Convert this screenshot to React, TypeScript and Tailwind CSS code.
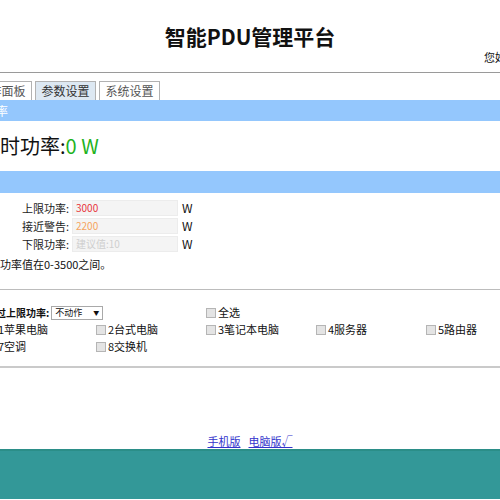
import React from "react";

const font = { fontFamily: '"Microsoft YaHei", "Noto Sans CJK SC", "Noto Sans", sans-serif' };

const tabs = [
  { name: "操作面板", active: false },
  { name: "参数设置", active: true },
  { name: "系统设置", active: false },
];

const limits = [
  { label: "上限功率:", value: "3000", color: "text-[#e8363c]" },
  { label: "接近警告:", value: "2200", color: "text-[#f4a461]" },
  { label: "下限功率:", value: "", color: "text-[#333]" },
];

const devices = ["1苹果电脑", "2台式电脑", "3笔记本电脑", "4服务器", "5路由器", "7空调", "8交换机"];

function Check({ label }: { label: string }) {
  return (
    <label className="flex items-center gap-[2px] whitespace-nowrap">
      <span className="w-[10px] h-[10px] border border-[#b5b5b5] bg-[#e4e4e4]" />
      <span>{label}</span>
    </label>
  );
}

export default function App() {
  return (
    <div className="w-[500px] h-[500px] overflow-hidden bg-white text-[#111]" style={font}>
      <div className="w-[600px] -ml-[50px] flex flex-col">
        {/* header */}
        <div className="h-[73px] flex flex-col pt-[21px] border-b border-[#9a9a9a]">
          <div className="text-center text-[21px] leading-[30px] font-bold">智能PDU管理平台</div>
          <div className="pl-[534px] -mt-[2px] text-[11px] leading-[16px] whitespace-nowrap">您好，admin</div>
        </div>

        {/* tabs */}
        <div className="flex gap-[3px] pl-[21px] mt-[8px] h-[19px]">
          {tabs.map((t) => (
            <div
              key={t.name}
              className={`w-[61px] h-[19px] border border-b-0 border-[#b2b2b2] text-[12px] leading-[18px] text-center ${
                t.active ? "bg-[#dde8f2] text-[#333]" : "bg-white text-[#555]"
              }`}
            >
              {t.name}
            </div>
          ))}
        </div>

        {/* realtime power */}
        <div className="h-[21px] bg-[#94c7fd] text-white text-[12px] leading-[21px] pl-[10px]">实时功率</div>
        <div className="h-[50px] flex items-center pl-[30px] text-[20px]">
          <span>实时功率:</span>
          <span className="text-[#1eb31e]">0 W</span>
        </div>

        {/* thresholds */}
        <div className="h-[22px] bg-[#94c7fd] text-white text-[12px] leading-[22px] pl-[10px]">阈值</div>
        <div className="flex flex-col pt-[6px]">
          {limits.map((l) => (
            <div key={l.label} className="h-[18px] flex items-center text-[11px]">
              <span className="w-[119px] text-right text-[#222]">{l.label}</span>
              <span
                className={`ml-[3px] w-[106px] h-[16px] bg-[#f4f4f4] border border-[#ececec] pl-[3px] text-[10px] leading-[14px] ${l.color}`}
              >
                {l.value || <span className="text-[#cfcfcf]">建议值:10</span>}
              </span>
              <span className="ml-[4px] text-[12px]">W</span>
            </div>
          ))}
          <div className="mt-[2px] h-[18px] pl-[28px] text-[11px] leading-[18px] whitespace-nowrap">注：功率值在0-3500之间。</div>
        </div>

        <div className="mt-[16px] h-px bg-[#bcbcbc]" />

        {/* actions */}
        <div className="pt-[14px] pl-[36px] text-[11px]">
          <div className="grid grid-cols-[110px_110px_110px_110px_110px] auto-rows-[17px] items-center">
            <div className="col-span-2 flex items-center gap-[2px] whitespace-nowrap">
              <span className="font-bold text-[10px]">超过上限功率:</span>
              <span className="w-[52px] h-[14px] border border-[#a9a9a9] flex items-center justify-between px-[3px] text-[9px] leading-[12px]">
                <span>不动作</span>
                <span className="text-[6px]">▼</span>
              </span>
            </div>
            <Check label="全选" />
            <div />
            <div />
            {devices.map((d) => (
              <Check key={d} label={d} />
            ))}
          </div>
        </div>

        <div className="mt-[11px] h-[2px] bg-[#cacaca]" />

        {/* version links */}
        <div className="h-[65px]" />
        <div className="h-[16px] flex justify-center gap-[8px] text-[11px] leading-[16px] text-[#3333cc]">
          <span className="underline">手机版</span>
          <span className="underline">电脑版√</span>
        </div>

        <div className="h-[50px] bg-[#339898] border-t-2 border-[#2b8e88]" />
      </div>
    </div>
  );
}
